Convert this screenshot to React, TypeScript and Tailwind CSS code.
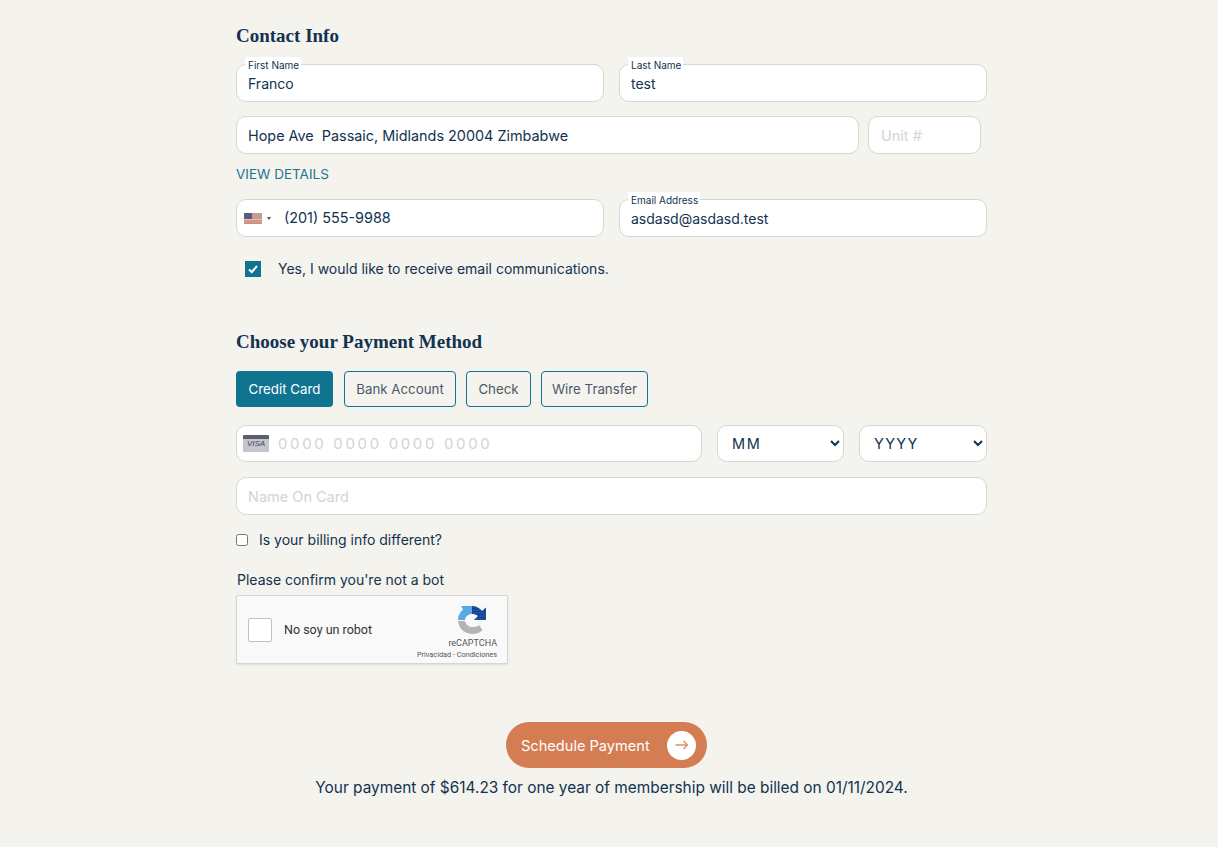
const inputBox =
  "h-[38px] rounded-[10px] border border-[#d6d6d2] bg-white px-[11px] text-[#12324f] outline-none placeholder:text-[14.5px] placeholder:text-[#d4d4d0]";

function FloatInput({ label, value }: { label: string; value: string }) {
  return (
    <div className="relative">
      <span className="absolute left-[9px] top-[-7px] bg-white pl-[3px] pr-[2px] text-[10px] leading-[16px] text-[#12324f]">
        {label}
      </span>
      <input readOnly value={value} className={inputBox + " w-full text-[14px]"} />
    </div>
  );
}

function FlagIcon() {
  return (
    <svg width="18" height="11" viewBox="0 0 18 11">
      <rect width="18" height="11" fill="#c99a94" />
      <rect y="10" width="18" height="1" fill="#e08a5f" />
      <rect width="8" height="6" fill="#5d5d78" />
      <rect y="6" width="18" height="1" fill="#dcc2bf" />
    </svg>
  );
}

function CardIcon() {
  return (
    <div className="flex h-[17px] w-[26px] flex-col overflow-hidden rounded-[1px] bg-[#c4c6c9]">
      <div className="h-[4px] bg-[#5c5c70]" />
      <span className="text-center font-['Liberation_Sans',sans-serif] text-[8px] italic leading-[9px] text-[#44465a]">
        VISA
      </span>
    </div>
  );
}

function RecaptchaLogo() {
  return (
    <svg width="29" height="29" viewBox="0 0 29 29">
      <defs>
        <pattern id="dots" width="3" height="3" patternUnits="userSpaceOnUse">
          <circle cx="1" cy="1" r="0.7" fill="#4a7fc4" />
        </pattern>
      </defs>
      <path d="M3 0 L14 0 L14 8 C10 8 7.5 10.5 7 14 L0 14 C0 10 1.5 6.5 5 3.5 Z" fill="#5aa7e6" />
      <path d="M14 0 C18 0 22 2 24 5 L28 1.5 L28 14 L16 14 L20 10 C18 8.5 16 8 14 8 Z" fill="#123f94" />
      <path d="M14 0 C18 0 22 2 24 5 L28 1.5 L28 14 L16 14 L20 10 C18 8.5 16 8 14 8 Z" fill="url(#dots)" />
      <path d="M0 15 L7 15 C8 19 11 21 15 21 C18 21 20 20 21 19 L24.5 24 C21.5 27 18 28 14.5 28 C7 28 1 23 0 15 Z" fill="#b4b4b4" />
    </svg>
  );
}

const payTabs = [
  { label: "Bank Account", width: "ml-[1px] w-[112px]" },
  { label: "Check", width: "w-[65px]" },
  { label: "Wire Transfer", width: "w-[107px]" },
];

export default function App() {
  return (
    <div className="min-h-[847px] bg-[#f4f3ee] font-['Inter',sans-serif] text-[#12324f]">
      <form className="ml-[236px] flex w-[751px] flex-col pt-[25px]">
        <h2 className="font-['Liberation_Serif',serif] text-[19px] font-bold leading-[22px] text-[#12324f]">
          Contact Info
        </h2>

        <div className="mt-[17px] grid grid-cols-2 gap-[15px]">
          <FloatInput label="First Name" value="Franco" />
          <FloatInput label="Last Name" value="test" />
        </div>

        <div className="mt-[14px] flex">
          <input
            readOnly
            value="Hope Ave  Passaic, Midlands 20004 Zimbabwe"
            className={inputBox + " w-[623px] flex-none text-[14.4px]"}
          />
          <input placeholder="Unit #" className={inputBox + " ml-[9px] w-[113px] flex-none pl-[12px] text-[14px]"} />
        </div>

        <a className="mt-[11px] text-[13.5px] leading-[18px] text-[#1d7591]">VIEW DETAILS</a>

        <div className="mt-[16px] grid grid-cols-2 gap-[15px]">
          <div className="flex h-[38px] items-center rounded-[10px] border border-[#d6d6d2] bg-white pl-[7px]">
            <FlagIcon />
            <span className="ml-[5px] h-0 w-0 border-x-[2.5px] border-t-[3px] border-x-transparent border-t-[#555]" />
            <span className="ml-[13px] text-[14.4px]">(201) 555-9988</span>
          </div>
          <FloatInput label="Email Address" value="asdasd@asdasd.test" />
        </div>

        <label className="ml-[9px] mt-[24px] flex items-center gap-[17px] text-[14px] leading-[16px]">
          <span className="flex h-[16px] w-[16px] items-center justify-center bg-[#0e7490]">
            <svg width="12" height="12" viewBox="0 0 12 12" fill="none" stroke="#fff" strokeWidth="2">
              <path d="M2 6.5 L4.8 9 L10 3" />
            </svg>
          </span>
          Yes, I would like to receive email communications.
        </label>

        <h2 className="mt-[54px] font-['Liberation_Serif',serif] text-[19px] font-bold leading-[22px] text-[#12324f]">
          Choose your Payment Method
        </h2>

        <div className="mt-[18px] flex gap-[10px]">
          <button type="button" className="h-[36px] w-[97px] rounded-[4px] bg-[#0e7490] pt-[1px] text-[13.3px] text-white">
            Credit Card
          </button>
          {payTabs.map((t) => (
            <button
              key={t.label}
              type="button"
              className={
                "h-[36px] rounded-[4px] border border-[#0e7490] pt-[1px] text-[13.3px] text-[#4a5a68] " + t.width
              }
            >
              {t.label}
            </button>
          ))}
        </div>

        <div className="mt-[18px] flex gap-[15px]">
          <div className="flex h-[37px] w-[466px] items-center rounded-[10px] border border-[#d6d6d2] bg-white pl-[6px]">
            <CardIcon />
            <input
              placeholder="0000 0000 0000 0000"
              className="ml-[9px] flex-1 bg-transparent pt-[1px] text-[15px] tracking-[2.65px] outline-none placeholder:text-[#d4d4d0]"
            />
          </div>
          <select className="h-[37px] w-[127px] rounded-[10px] border border-[#d6d6d2] bg-white pl-[10px] text-[14.5px] tracking-[1.6px] text-[#12324f] outline-none">
            <option>MM</option>
          </select>
          <select className="h-[37px] w-[128px] rounded-[10px] border border-[#d6d6d2] bg-white pl-[10px] text-[14.5px] tracking-[1.3px] text-[#12324f] outline-none">
            <option>YYYY</option>
          </select>
        </div>

        <input placeholder="Name On Card" className={inputBox + " mt-[15px] w-full text-[14px]"} />

        <label className="mt-[16px] flex items-center gap-[11px] text-[14px] leading-[18px]">
          <input type="checkbox" className="m-0 h-[12px] w-[12px]" />
          Is your billing info different?
        </label>

        <p className="mt-[22px] pl-[1px] text-[14px] leading-[18px]">Please confirm you're not a bot</p>

        <div className="mt-[6px] flex h-[69px] w-[272px] items-center rounded-[2px] border border-[#d6d6d6] bg-[#f9f9f9] pl-[11px] pr-[10px] font-['Roboto',sans-serif] shadow-[0_1px_2px_rgba(0,0,0,0.1)]">
          <span className="h-[24px] w-[24px] rounded-[2px] border-[1.5px] border-[#c1c1c1] bg-white" />
          <span className="ml-[12px] flex-1 pt-[2px] text-[12.5px] text-[#333]">No soy un robot</span>
          <div className="flex flex-col items-end self-start pt-[10px]">
            <div className="flex flex-col items-center">
              <RecaptchaLogo />
              <span className="mt-[2px] text-[9px] leading-[13px] text-[#555]">reCAPTCHA</span>
            </div>
            <span className="whitespace-nowrap text-[7.3px] leading-[9px] text-[#555]">Privacidad - Condiciones</span>
          </div>
        </div>

        <div className="mt-[58px] flex flex-col items-center">
          <button
            type="button"
            className="mr-[10px] flex h-[46px] w-[201px] items-center justify-between rounded-full bg-[#d47d52] pl-[15px] pr-[11px] text-[14.6px] text-white"
          >
            <span className="pt-[3px]">Schedule Payment</span>
            <span className="flex h-[29px] w-[29px] items-center justify-center rounded-full bg-white">
              <svg width="14" height="10" viewBox="0 0 14 10" fill="none" stroke="#d98f68" strokeWidth="1.4">
                <path d="M0.5 5 H12.5 M8.5 1 L12.5 5 L8.5 9" />
              </svg>
            </span>
          </button>
          <p className="mt-[10px] text-[15.4px] leading-[20px]">
            Your payment of $614.23 for one year of membership will be billed on 01/11/2024.
          </p>
        </div>
      </form>
    </div>
  );
}
